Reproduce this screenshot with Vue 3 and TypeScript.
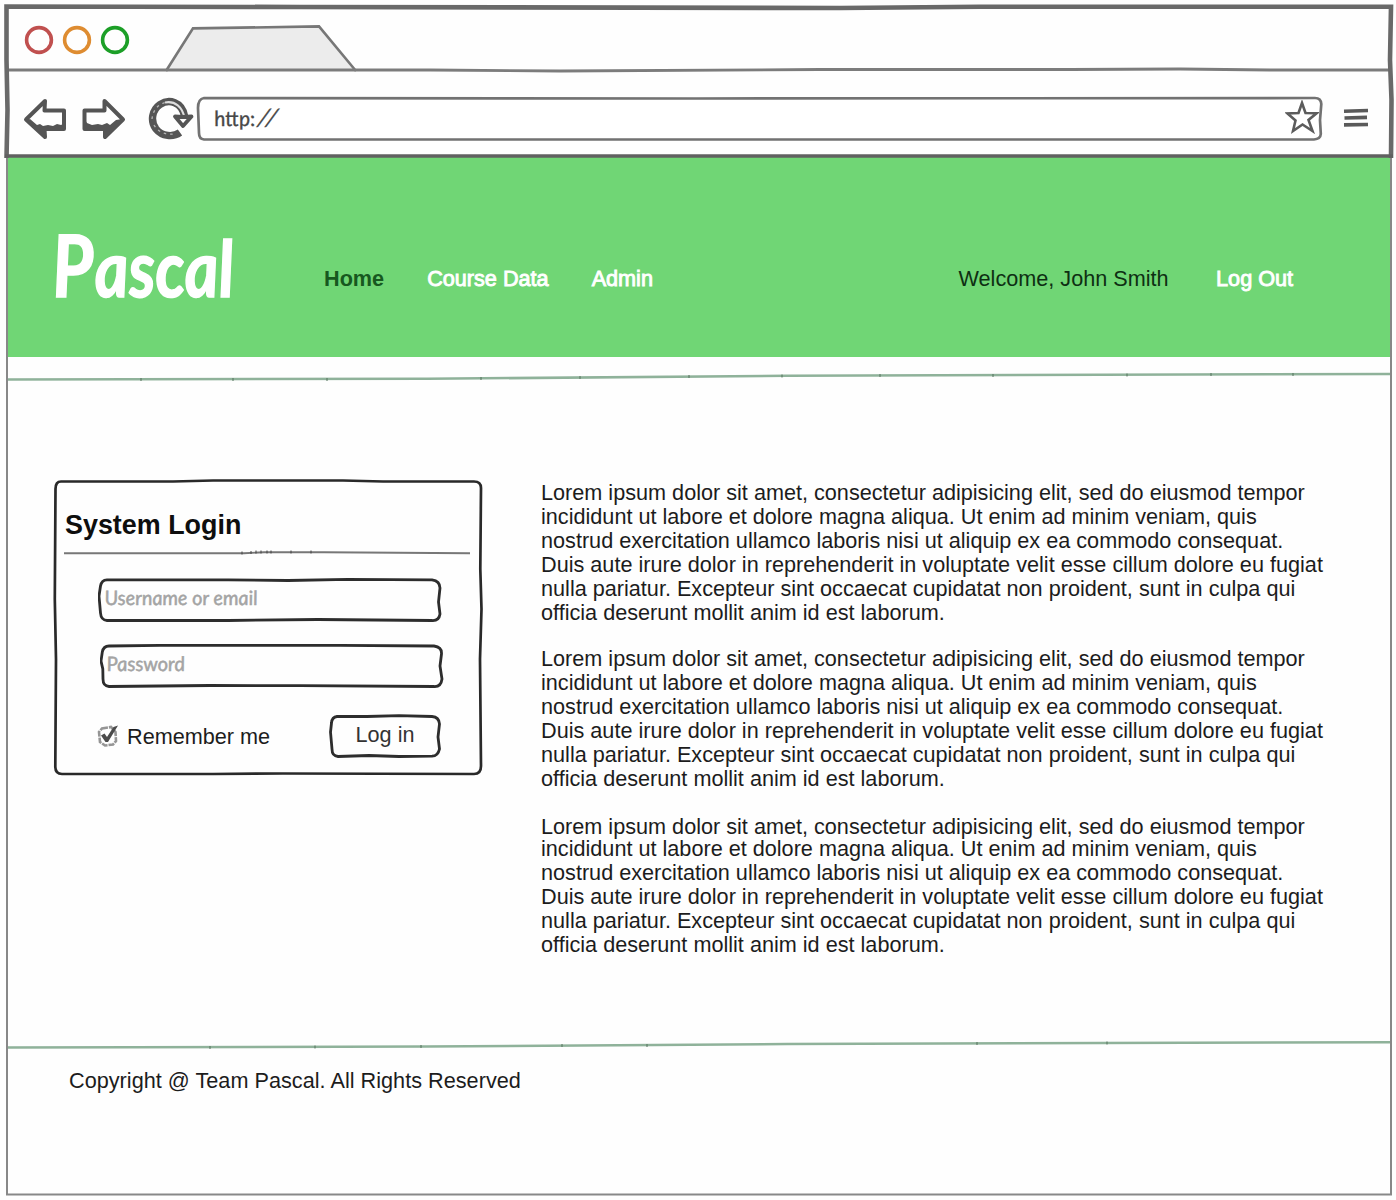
<script setup lang="ts">
interface NavItem {
  label: string
  active?: boolean
}

const nav: NavItem[] = [
  { label: 'Home', active: true },
  { label: 'Course Data' },
  { label: 'Admin' },
]

const lines: string[] = [
  'Lorem ipsum dolor sit amet, consectetur adipisicing elit, sed do eiusmod tempor',
  'incididunt ut labore et dolore magna aliqua. Ut enim ad minim veniam, quis',
  'nostrud exercitation ullamco laboris nisi ut aliquip ex ea commodo consequat.',
  'Duis aute irure dolor in reprehenderit in voluptate velit esse cillum dolore eu fugiat',
  'nulla pariatur. Excepteur sint occaecat cupidatat non proident, sunt in culpa qui',
  'officia deserunt mollit anim id est laborum.',
]

const paragraphs: string[][] = [lines, lines, lines]
</script>

<template>
  <div class="window">
    <header class="chrome">
      <div class="tabs">
        <svg class="lights" width="110" height="32" viewBox="0 0 110 32" fill="none" stroke-width="3.6">
          <circle cx="16" cy="16" r="12.4" stroke="#c0504f" />
          <circle cx="54" cy="16" r="12.4" stroke="#de8c31" />
          <circle cx="92" cy="16" r="12.4" stroke="#1c9f27" />
        </svg>
        <svg class="tab" width="196" height="48" viewBox="0 0 196 48">
          <path d="M3 47 L30 4.400 L156 2.400 L193 47" fill="#ececec" stroke="#777" stroke-width="2.600" />
        </svg>
      </div>
      <div class="toolbar">
        <svg class="arrow" width="44" height="42" viewBox="0 0 44 42">
          <path d="M3 21.500 L22 3 L21.500 12.500 H41 V31 H21.500 L22 39 Z" fill="#fff" stroke="#555" stroke-width="4" stroke-linejoin="round" />
          <path d="M4 22 L22 39 V31 H42 V25 L38 27 L34 26 L30 28 L25 27 L20 28 L17 26 L14 27 L7 21 Z" fill="#555" />
        </svg>
        <svg class="arrow next" width="44" height="42" viewBox="0 0 44 42">
          <path d="M2.500 12.500 H22.500 V3 L41 21.500 L23 39 V31 H2.500 Z" fill="#fff" stroke="#555" stroke-width="4" stroke-linejoin="round" />
          <path d="M2 31 V20 L5 25 L10 27 L16 26 L20 27 L25 25 L28 27 L34 22 L40 21 L23 39 V31 Z" fill="#555" />
        </svg>
        <svg class="reload" width="48" height="44" viewBox="0 0 48 44" fill="none">
          <path d="M33 35.500 C26 40.500 15 39.500 9 32 C3 24 5 13 13 7.500 C22 1.500 35 5 37.500 19" stroke="#555" stroke-width="7.400" />
          <path d="M18 5.500 C28 3.500 35.500 10 37.500 21" stroke="#ddd" stroke-width="2" />
          <path d="M5 22 C6 13 11 7.500 18 5.500 M7 28 C11 35 18 38 27 37" stroke="#b5b5b5" stroke-width="1.300" stroke-dasharray="2.500 4" />
          <path d="M28 19.500 L35.500 20 L44.500 19.500 L36 29 Z" fill="#fff" stroke="#555" stroke-width="3.800" stroke-linejoin="round" />
        </svg>
        <div class="address">
          <svg class="outline" width="1127" height="46" viewBox="0 0 1127 46">
            <path d="M8 2 L500 2.500 L1119 2 Q1125 2 1125.300 8 L1124 24 L1124.800 38 Q1124.500 43 1118 43.500 L8 43.500 Q3 43 3 37 L2 12 Q2 3 8 2 Z" fill="#fff" stroke="#727272" stroke-width="2.700" />
          </svg>
          <span class="url hand">http:<b>//</b></span>
          <svg class="star" width="34" height="34" viewBox="0 0 34 34">
            <path d="M17 3 L20.500 13 L31.500 13.300 L23.500 20 L27.500 31 L17.500 24.500 L8 31 L10.500 20.500 L2.500 13.500 L13.500 13 Z" fill="#fff" stroke="#5c5c5c" stroke-width="2.600" />
          </svg>
        </div>
        <svg class="menu" width="26" height="22" viewBox="0 0 26 22" stroke="#5a5a5a" stroke-width="3.600">
          <path d="M1 4.200 L25 3.500 M1.500 11 L24 10.400 M1 17.900 L25 17.500" />
        </svg>
      </div>
    </header>

    <section class="masthead">
      <div class="logo hand">Pascal</div>
      <nav>
        <a v-for="item in nav" :key="item.label" :class="{ active: item.active }">{{ item.label }}</a>
      </nav>
      <span class="welcome">Welcome, John Smith</span>
      <a class="logout">Log Out</a>
    </section>

    <svg class="rule" width="1384" height="12" viewBox="0 0 1384 12" fill="none">
      <path d="M0 9.400 L420 8.800 L780 5.800 L1384 4" stroke="#8fb29a" stroke-width="2.500" />
      <path d="M134 8 v3 M226 8 v3 M320 8 v3 M474 7 v3 M573 6 v3 M682 5 v3 M775 4.500 v3 M873 4 v3 M986 4 v3 M1120 3.500 v3 M1204 3 v3 M1286 3 v3" stroke="#55735d" />
    </svg>

    <main>
      <form class="login" @submit.prevent>
        <svg class="outline panel" width="430" height="298" viewBox="0 0 430 298" fill="none" stroke="#292929" stroke-width="2.700">
          <path d="M8 2.500 L120 2.500 L160 1.500 L290 1.500 L330 2.500 L421 2.500 Q428 2.500 428 9 L427.300 90 L428.500 130 L427 180 L428 287 Q428 295 421 295 L230 294.500 L160 295 L9 295 Q2.500 295 2.300 288 L3 180 L1.800 120 L2.500 10 Q2.500 2.500 8 2.500 Z" />
        </svg>
        <h1>System Login</h1>
        <svg class="underline" width="406" height="5" viewBox="0 0 406 5" fill="none">
          <path d="M0 3.200 H180 L200 2.200 H260 L406 3.200" stroke="#777" stroke-width="1.900" />
          <path d="M178 1.500 v3 M187 1 v3 M192 .5 v3 M197 .5 v3 M203 .5 v3 M207 .5 v3 M227 .5 v3 M247 .5 v3" stroke="#444" />
        </svg>
        <div class="field">
          <svg class="outline" width="344" height="44" viewBox="0 0 344 44" fill="none" stroke="#2d2d2d" stroke-width="2.800">
            <path d="M9 1.800 L130 1.800 L190 2.500 L250 1.400 L334 1.800 Q342 3 342 10 L340.500 24 L342 36 Q341 43 334 42.500 L220 41.500 L130 42.500 L9 42.500 Q3 42 2.500 35 L1 18 L2.500 8 Q3.500 2 9 1.800 Z" />
          </svg>
          <span class="placeholder hand">Username or email</span>
        </div>
        <div class="field second">
          <svg class="outline" width="344" height="44" viewBox="0 0 344 44" fill="none" stroke="#2d2d2d" stroke-width="2.800">
            <path d="M9 2 L60 1.400 L240 1.400 L334 2 Q342 3 341.500 10 L340 22 L342 35 Q341 43 334 42.500 L200 41.700 L110 41.500 L9 42.500 Q3 42 3 35 L2.800 25 L1 17 L2.300 8 Q3.500 2 9 2 Z" />
          </svg>
          <span class="placeholder password hand">Password</span>
        </div>
        <div class="actions">
          <label>
            <svg width="22" height="24" viewBox="0 0 22 24" fill="none">
              <path d="M5 4.500 L14 3 L18.500 8 L19 17 L16 20.500 L8 21.500 L3 18 L2 8 Z" stroke="#959595" stroke-width="2.600" stroke-dasharray="6 1" />
              <path d="M4 11.500 L7.500 9.500 L10 13 L16.500 3 L21 1.500 L11 18 L8.500 18 Z" fill="#4b4b4b" />
            </svg>
            <span>Remember me</span>
          </label>
          <button type="submit">
            <svg class="outline" width="112" height="44" viewBox="0 0 112 44" fill="none" stroke="#2d2d2d" stroke-width="2.800">
              <path d="M8 2.500 L38 2.500 L70 1.600 L103 2.500 Q110 3 110.500 10 L109 23 L110.500 35 Q109 42 103 42.200 L70 42.500 L40 41.500 L9 42.500 Q3 42 3 35 L1.500 18 L2.500 9 Q3 3 8 2.500 Z" />
            </svg>
            <span>Log in</span>
          </button>
        </div>
      </form>

      <article>
        <p v-for="(paragraph, i) in paragraphs" :key="i">
          <span v-for="line in paragraph" :key="line">{{ line }}</span>
        </p>
      </article>
    </main>

    <svg class="rule" width="1384" height="12" viewBox="0 0 1384 12" fill="none">
      <path d="M0 8.600 L420 7.600 L780 5 L1384 3.200" stroke="#8fb29a" stroke-width="2.500" />
      <path d="M203 7 v3 M308 6.500 v3 M414 6 v3 M555 5 v3 M640 5 v3 M970 3 v3 M1100 2.500 v3" stroke="#55735d" />
    </svg>

    <footer>Copyright @ Team Pascal. All Rights Reserved</footer>

    <svg class="frame" width="1396" height="1200" viewBox="0 0 1396 1200" fill="none">
      <path d="M7 157 V1194.500 H1391 V157" stroke="#888" stroke-width="2" />
      <path d="M8 70 H430 L560 71 L820 69.500 H1070 L1180 69 L1270 70 H1390" stroke="#7c7c7c" stroke-width="2.800" />
      <path d="M6.500 158 L7.500 110 L6.500 60 V6.500 L300 7 L840 8 L980 6.700 L1391 6.700 L1390 60 L1391.500 100 L1391 158" stroke="#696969" stroke-width="4.600" />
      <path d="M5 156 H1393" stroke="#606060" stroke-width="3.400" />
    </svg>
  </div>
</template>

<style>
body {
  margin: 0;
  background: #fefefe;
}
</style>

<style scoped>
.window {
  position: relative;
  box-sizing: border-box;
  width: 1396px;
  height: 1200px;
  padding: 0 5px 0 7px;
  overflow: hidden;
  display: flex;
  flex-direction: column;
  background: #fefefe;
  color: #1c1c1c;
  font: 21.65px/24px "Liberation Sans", Arial, sans-serif;
}

svg {
  display: block;
  flex: none;
}

.frame,
.outline {
  position: absolute;
  top: 0;
  left: 0;
  pointer-events: none;
}

.hand {
  font-family: Lato, sans-serif;
  font-style: italic;
}

.chrome {
  height: 157px;
  flex: none;
}

.tabs {
  height: 71px;
  display: flex;
  align-items: flex-end;
}

.lights {
  margin: 0 0 15px 16px;
}

.tab {
  margin-left: 30px;
  margin-bottom: -1px;
}

.toolbar {
  height: 86px;
  display: flex;
  align-items: flex-start;
}

.arrow {
  margin: 27px 0 0 16px;
}

.arrow.next {
  margin-left: 15px;
}

.reload {
  margin: 26px 0 0 21px;
}

.address {
  position: relative;
  width: 1127px;
  height: 46px;
  margin: 25px 0 0 1px;
  display: flex;
  align-items: center;
}

.url {
  position: relative;
  margin-left: 18px;
  font-size: 21px;
  color: #484848;
  margin-top: -4px;
  transform: skewX(7deg);
  -webkit-text-stroke: 0.3px #484848;
}

.url b {
  display: inline-block;
  margin-left: 4px;
  font-size: 24px;
  font-weight: 400;
  letter-spacing: 3px;
  transform: skewX(-20deg);
}

.star {
  position: relative;
  margin-left: auto;
  margin-right: 4px;
  margin-top: -4px;
}

.menu {
  margin: 36px 0 0 20px;
}

.masthead {
  height: 200px;
  flex: none;
  display: flex;
  align-items: flex-start;
  background: #70d675;
  color: #0e2f13;
}

.masthead a,
.masthead span {
  margin-top: 110px;
  line-height: 24px;
  white-space: nowrap;
}

.logo {
  flex: none;
  width: 180px;
  margin: 62px 0 0 45px;
  font-size: 78px;
  line-height: 90px;
  font-weight: 700;
  color: #fff;
  -webkit-text-stroke: 1.5px #fff;
  transform: scaleX(0.84) skewX(4deg);
  transform-origin: left;
}

.logo::first-letter {
  font-size: 86px;
}

nav {
  flex: none;
  width: 634.5px;
  margin-left: 92px;
  display: flex;
  gap: 43px;
}

nav a,
.logout {
  color: #fff;
  -webkit-text-stroke: 0.9px #fff;
}

nav .active {
  color: #17581f;
  font-weight: 700;
  -webkit-text-stroke: 0;
}

.masthead .logout {
  margin-left: 47.5px;
}

.rule {
  margin-top: 13px;
}

main {
  height: 644px;
  flex: none;
  display: flex;
  align-items: flex-start;
}

.login {
  position: relative;
  box-sizing: border-box;
  width: 430px;
  height: 298px;
  margin: 97px 0 0 46px;
  padding: 31px 11px 0;
}

h1 {
  margin: 0;
  padding-left: 1px;
  font-size: 26.9px;
  line-height: 30px;
  color: #0e0e0e;
}

.underline {
  margin-top: 10px;
}

.field {
  position: relative;
  width: 344px;
  height: 44px;
  margin: 23px 0 0 34px;
}

.field.second {
  margin: 22px 0 0 36px;
}

.placeholder {
  display: block;
  padding: 7px 0 0 6px;
  font-size: 19.8px;
  line-height: 24px;
  color: #a4a4a4;
  -webkit-text-stroke: 0.5px #a4a4a4;
  transform: skewX(6deg);
}

.password {
  font-size: 20px;
}

.actions {
  margin: 26px 0 0 33px;
  display: flex;
  align-items: flex-start;
}

label {
  width: 232px;
  margin-top: 10px;
  display: flex;
  gap: 8px;
}

label span {
  padding-top: 1px;
}

button {
  position: relative;
  width: 112px;
  height: 44px;
  padding: 0 0 3px;
  border: 0;
  background: none;
  color: #333;
  font: inherit;
}

article {
  margin: 99px 0 0 58px;
}

p {
  margin: 0 0 22px;
}

p span {
  display: block;
  white-space: nowrap;
}

p:last-child {
  padding-top: 3px;
}

p:last-child span:first-child {
  line-height: 21px;
}

footer {
  padding: 18px 0 0 62px;
  letter-spacing: 0.02px;
}
</style>
